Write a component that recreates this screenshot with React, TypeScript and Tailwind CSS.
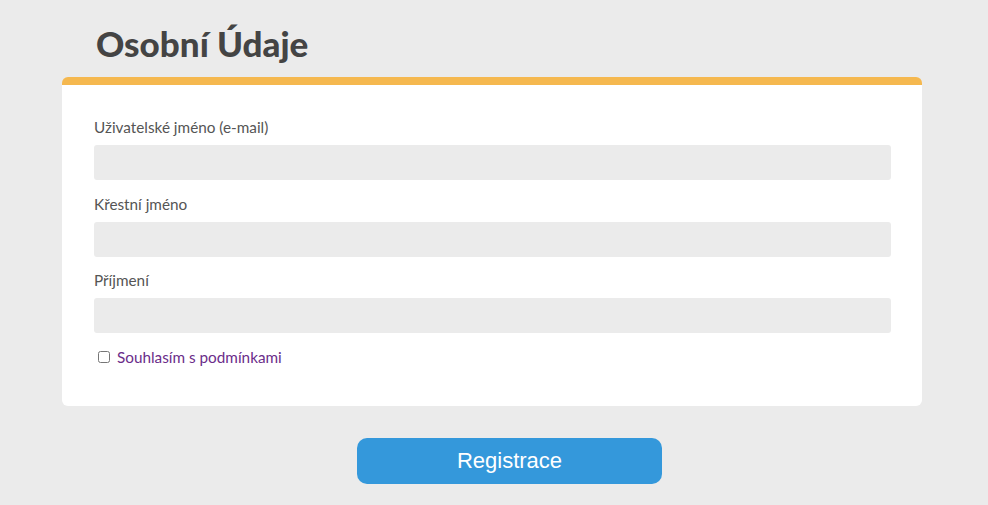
import React from "react";

const fields = ["Uživatelské jméno (e-mail)", "Křestní jméno", "Příjmení"];

const App = () => {
  return (
    <div className="min-h-[505px] w-full bg-[#ebebeb] font-['Lato','Noto_Sans',sans-serif] text-[#555]">
      <h1 className="pl-[96px] pt-[22px] text-[35px] font-black leading-[42px] text-[#444]">Osobní Údaje</h1>
      <div className="ml-[62px] mt-[13px] w-[860px] rounded-[6px] border-t-[8px] border-[#f5b84f] bg-white px-[32px] pt-[32px] pb-[39px]">
        {fields.map((f) => (
          <div key={f} className="mb-[13.5px]">
            <label className="block text-[15.3px] leading-[20px] text-[#555]">{f}</label>
            <input type="text" className="mt-[8px] block h-[35px] w-[797px] rounded-[3px] bg-[#ebebeb] outline-none" />
          </div>
        ))}
        <label className="mt-[1px] flex items-center gap-[7px] pl-[4px] text-[15.3px] leading-[20px] text-[#6b2d8a]">
          <input type="checkbox" className="h-[12px] w-[12px]" />
          Souhlasím s podmínkami
        </label>
      </div>
      <button className="ml-[357px] mt-[32px] h-[46px] w-[305px] rounded-[10px] bg-[#3498db] font-['Liberation_Sans',Arial,sans-serif] text-[22px] text-white">
        Registrace
      </button>
    </div>
  );
};

export default App;
